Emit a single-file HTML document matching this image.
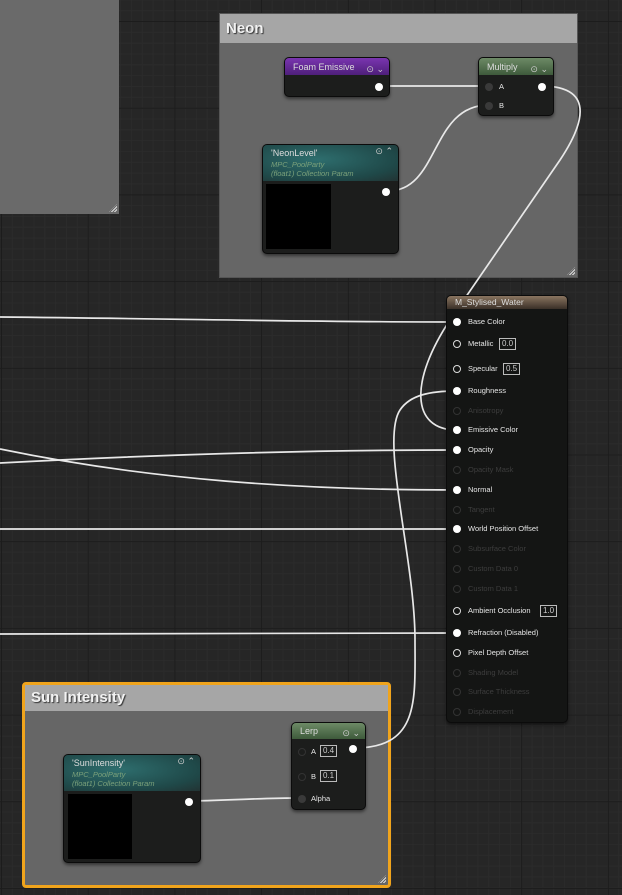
<!DOCTYPE html>
<html><head><meta charset="utf-8"><style>
*{margin:0;padding:0;box-sizing:border-box}
body{width:622px;height:895px;overflow:hidden;position:relative;font-family:"Liberation Sans",sans-serif;
background-color:#262626;
background-image:
linear-gradient(90deg,#1c1c1c 1px,transparent 1px),
linear-gradient(0deg,#1c1c1c 1px,transparent 1px),
linear-gradient(90deg,#2b2b2b 1px,transparent 1px),
linear-gradient(0deg,#2b2b2b 1px,transparent 1px);
background-size:86.7px 86.7px,86.7px 86.7px,10.84px 10.84px,10.84px 10.84px;
background-position:1px 22px,1px 22px,1px 22px,1px 22px}
.abs{position:absolute}
.cbox{position:absolute;background:#6a6a6a}
.chead{position:absolute;left:0;right:0;top:0;background:#a6a6a6;color:#f2f2f2;font-weight:bold;text-shadow:1px 1px 1px #333;padding-left:6px}
.node{position:absolute;background:#1c1d1c;border:1px solid #0b0b0b;border-radius:5px;box-shadow:0 2px 3px rgba(0,0,0,.5);overflow:hidden}
.nh{position:absolute;left:0;right:0;top:0;color:#ddd;font-size:9px;padding-left:8px}
.pin{position:absolute;width:8px;height:8px;border-radius:50%;background:#fff}
.pin.o{background:none;border:1.5px solid #ddd}
.pin.d{background:#3a3a3a}
.pin.g{background:none;border:1.5px solid #333}
.lbl{position:absolute;font-size:7.5px;color:#e6e6e6;white-space:nowrap}
.lbl.g{color:#3d3d3d}
.val{position:absolute;border:1px solid #bbb;color:#ccc;font-size:8px;padding:0 2px;line-height:10px}
.icons{position:absolute;right:5px;top:2px;color:#ccc;font-size:9px}
.grip{position:absolute;right:2px;bottom:2px;width:8px;height:8px;background:repeating-linear-gradient(135deg,transparent 0 1px,#ddd 1px 2px);clip-path:polygon(100% 0,100% 100%,0 100%)}
</style></head><body>

<div class="cbox" style="left:0;top:0;width:119px;height:214px;"><div class="grip"></div></div>

<div class="cbox" style="left:219px;top:13px;width:359px;height:265px;background:#666;border:1px solid #555">
<div class="chead" style="height:29px;font-size:15px;line-height:29px">Neon</div><div class="grip"></div></div>

<div class="cbox" style="left:22px;top:682px;width:369px;height:206px;background:#666;border:3px solid #f0a41c;border-radius:4px">
<div class="chead" style="height:26px;font-size:15px;line-height:26px">Sun Intensity</div><div class="grip"></div></div>

<svg class="abs" style="left:0;top:0" width="622" height="895">
<g fill="none" stroke="#e8e8e8" stroke-width="1.7">
<path d="M0,317 C200,319 300,322 457,322"/>
<path d="M0,449 C150,480 300,490 457,490"/>
<path d="M0,463 C150,455 300,450 457,450"/>
<path d="M0,529 L457,529"/>
<path d="M0,634 L457,633"/>
<path d="M388,86 L486,86"/>
<path d="M388,191 C440,191 430,105 489,105"/>
<path d="M541,86 C600,86 580,130 560,160 L450,320 C410,380 410,430 457,430"/>
<path d="M354,748 C420,748 415,700 415,640 C415,560 380,440 400,410 C410,395 430,391 457,391"/>
<path d="M190,801 C240,800 260,798 300,798"/>
</g></svg>

<!-- Foam Emissive -->
<div class="node" style="left:284px;top:57px;width:106px;height:40px">
<div class="nh" style="height:17px;line-height:18px;background:linear-gradient(180deg,#7a35b0,#4e1f7a)">Foam Emissive<span class="icons">⊙ ⌄</span></div>
<div class="pin" style="left:90px;top:25px"></div></div>

<!-- Multiply -->
<div class="node" style="left:478px;top:57px;width:76px;height:59px">
<div class="nh" style="height:17px;line-height:18px;background:linear-gradient(180deg,#6d8a66,#3e5a3b)">Multiply<span class="icons">⊙ ⌄</span></div>
<div class="pin d" style="left:6px;top:25px"></div><div class="lbl" style="left:20px;top:24px">A</div>
<div class="pin d" style="left:6px;top:44px"></div><div class="lbl" style="left:20px;top:43px">B</div>
<div class="pin" style="left:59px;top:25px"></div></div>

<!-- NeonLevel -->
<div class="node" style="left:262px;top:144px;width:137px;height:110px">
<div class="nh" style="height:36px;background:radial-gradient(ellipse at 40% 40%,#2e6e6e,#1f4848 70%,#233)"><div style="line-height:14px;padding-top:1px">'NeonLevel'</div>
<div style="font-style:italic;color:#7aa07a;font-size:7.5px;line-height:9px">MPC_PoolParty<br>(float1) Collection Param</div><span class="icons" style="top:1px">⊙ ⌃</span></div>
<div class="abs" style="left:3px;top:39px;width:65px;height:65px;background:#000"></div>
<div class="pin" style="left:119px;top:43px"></div></div>

<!-- SunIntensity -->
<div class="node" style="left:63px;top:754px;width:138px;height:109px">
<div class="nh" style="height:36px;background:radial-gradient(ellipse at 40% 40%,#2e6e6e,#1f4848 70%,#233)"><div style="line-height:14px;padding-top:1px">'SunIntensity'</div>
<div style="font-style:italic;color:#7aa07a;font-size:7.5px;line-height:9px">MPC_PoolParty<br>(float1) Collection Param</div><span class="icons" style="top:1px">⊙ ⌃</span></div>
<div class="abs" style="left:4px;top:39px;width:64px;height:65px;background:#000"></div>
<div class="pin" style="left:121px;top:43px"></div></div>

<!-- Lerp -->
<div class="node" style="left:291px;top:722px;width:75px;height:88px">
<div class="nh" style="height:16px;line-height:17px;background:linear-gradient(180deg,#6d8a66,#3e5a3b)">Lerp<span class="icons">⊙ ⌄</span></div>
<div class="pin g" style="left:6px;top:25px"></div><div class="lbl" style="left:19px;top:24px">A</div><div class="val" style="left:28px;top:22px">0.4</div>
<div class="pin g" style="left:6px;top:50px"></div><div class="lbl" style="left:19px;top:49px">B</div><div class="val" style="left:28px;top:47px">0.1</div>
<div class="pin d" style="left:6px;top:72px"></div><div class="lbl" style="left:19px;top:71px">Alpha</div>
<div class="pin" style="left:57px;top:22px"></div></div>

<!-- Main node -->
<div class="node" style="left:446px;top:295px;width:122px;height:428px;background:#141514">
<div class="nh" style="height:13px;line-height:13px;font-size:8.5px;background:linear-gradient(180deg,#8a7560,#3a3028)">M_Stylised_Water</div>
</div>
<div class="abs" style="left:0;top:0">
<div class="pin" style="left:453px;top:318px"></div><div class="lbl" style="left:468px;top:317px">Base Color</div>
<div class="pin o" style="left:453px;top:340px"></div><div class="lbl" style="left:468px;top:339px">Metallic</div><div class="val" style="left:499px;top:338px">0.0</div>
<div class="pin o" style="left:453px;top:365px"></div><div class="lbl" style="left:468px;top:364px">Specular</div><div class="val" style="left:503px;top:363px">0.5</div>
<div class="pin" style="left:453px;top:387px"></div><div class="lbl" style="left:468px;top:386px">Roughness</div>
<div class="pin g" style="left:453px;top:407px"></div><div class="lbl g" style="left:468px;top:406px">Anisotropy</div>
<div class="pin" style="left:453px;top:426px"></div><div class="lbl" style="left:468px;top:425px">Emissive Color</div>
<div class="pin" style="left:453px;top:446px"></div><div class="lbl" style="left:468px;top:445px">Opacity</div>
<div class="pin g" style="left:453px;top:466px"></div><div class="lbl g" style="left:468px;top:465px">Opacity Mask</div>
<div class="pin" style="left:453px;top:486px"></div><div class="lbl" style="left:468px;top:485px">Normal</div>
<div class="pin g" style="left:453px;top:506px"></div><div class="lbl g" style="left:468px;top:505px">Tangent</div>
<div class="pin" style="left:453px;top:525px"></div><div class="lbl" style="left:468px;top:524px">World Position Offset</div>
<div class="pin g" style="left:453px;top:545px"></div><div class="lbl g" style="left:468px;top:544px">Subsurface Color</div>
<div class="pin g" style="left:453px;top:565px"></div><div class="lbl g" style="left:468px;top:564px">Custom Data 0</div>
<div class="pin g" style="left:453px;top:585px"></div><div class="lbl g" style="left:468px;top:584px">Custom Data 1</div>
<div class="pin o" style="left:453px;top:607px"></div><div class="lbl" style="left:468px;top:606px">Ambient Occlusion</div><div class="val" style="left:540px;top:605px">1.0</div>
<div class="pin" style="left:453px;top:629px"></div><div class="lbl" style="left:468px;top:628px">Refraction (Disabled)</div>
<div class="pin o" style="left:453px;top:649px"></div><div class="lbl" style="left:468px;top:648px">Pixel Depth Offset</div>
<div class="pin g" style="left:453px;top:669px"></div><div class="lbl g" style="left:468px;top:668px">Shading Model</div>
<div class="pin g" style="left:453px;top:688px"></div><div class="lbl g" style="left:468px;top:687px">Surface Thickness</div>
<div class="pin g" style="left:453px;top:708px"></div><div class="lbl g" style="left:468px;top:707px">Displacement</div>
</div>
</body></html>
